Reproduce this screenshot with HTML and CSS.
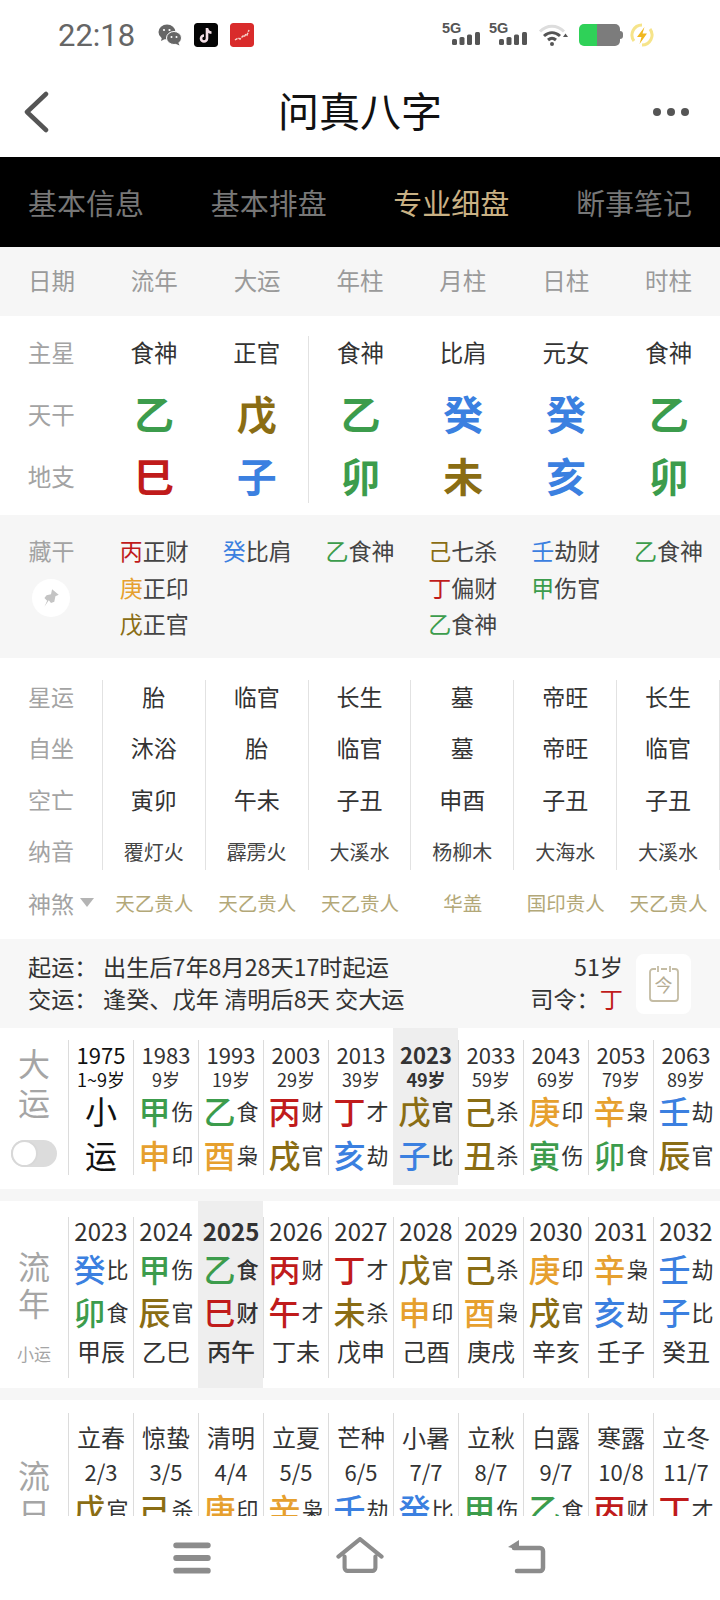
FILE: index.html
```html
<!DOCTYPE html>
<html lang="zh">
<head>
<meta charset="utf-8">
<title>问真八字</title>
<link rel="stylesheet" href="styles.css">
</head>
<body>
<div class="app">
  <div class="status">
    <span class="time">22:18</span>
    <svg class="ic-wechat" viewBox="0 0 24 24"><ellipse cx="9" cy="9" rx="8.5" ry="7.5" fill="#666"/><path d="M4 14l-1 4 5-2.500z" fill="#666"/><ellipse cx="16" cy="15" rx="7.500" ry="6.500" fill="#666" stroke="#fff"/><path d="M20 19l1.500 3.500-4.500-2z" fill="#666"/><circle cx="6" cy="7" r="1.100" fill="#fff"/><circle cx="11.500" cy="7" r="1.100" fill="#fff"/><circle cx="13.500" cy="14" r="1" fill="#fff"/><circle cx="18.500" cy="14" r="1" fill="#fff"/></svg>
    <svg class="ic-app ic-tiktok" viewBox="0 0 24 24"><rect width="24" height="24" rx="3" fill="#050505"/><path d="M13 5v10.500a3 3 0 1 1-3-3M13 5.500c.5 2.500 2.200 4 4.500 4.200" fill="none" stroke="#f4dfe6" stroke-width="2.600"/></svg>
    <svg class="ic-app ic-red" viewBox="0 0 24 24"><rect width="24" height="24" rx="3" fill="#d92b2b"/><path d="M5 17l3-2 2 1 3-3 1 1 2-3 1 1 2-5" fill="none" stroke="#f6d0c8" stroke-width="1.500" stroke-dasharray="3 1"/></svg>
    <div class="status-right">
      <div class="net"><span class="g5">5G</span><svg class="bars" viewBox="0 0 28 13"><rect x="0" y="7" width="5" height="6" rx="1.500"/><rect x="7.500" y="5" width="5" height="8" rx="1.500"/><rect x="15" y="2.500" width="5" height="10.500" rx="1.500"/><rect x="23" y="0" width="5" height="13" rx="1.500"/></svg></div>
      <div class="net net2"><span class="g5">5G</span><svg class="bars" viewBox="0 0 28 13"><rect x="0" y="7" width="5" height="6" rx="1.500"/><rect x="7.500" y="5" width="5" height="8" rx="1.500"/><rect x="15" y="2.500" width="5" height="10.500" rx="1.500"/><rect x="23" y="0" width="5" height="13" rx="1.500"/></svg></div>
      <svg class="ic-wifi" viewBox="0 0 30 22"><path d="M2 7.500C9 .5 19 .5 26 7.500" fill="none" stroke="#ddd" stroke-width="3"/><path d="M6 12c5-4.500 11-4.500 16 0" fill="none" stroke="#555" stroke-width="3"/><path d="M10 16c3-2.500 5-2.500 8 0" fill="none" stroke="#555" stroke-width="3"/><circle cx="14" cy="20" r="2" fill="#555"/><path d="M25 13h5l-2.500-3.500z" fill="#555"/></svg>
      <div class="battery"><span class="batt-fill"></span><span class="batt-rest"></span><span class="batt-cap"></span></div>
      <svg class="ic-bolt" viewBox="0 0 24 24"><path d="M12 2a10 10 0 0 0-8 16M12 22a10 10 0 0 0 8-16" fill="none" stroke="#f6e48a" stroke-width="3"/><path d="M14.500 4L7 14h4.500L9.500 21 17 10.500h-4.500z" fill="#f0b820"/></svg>
    </div>
  </div>

  <header class="topbar">
    <svg class="ic-back" viewBox="0 0 26 42"><path d="M23 3L4 21l19 18" fill="none" stroke="#555" stroke-width="4.500" stroke-linecap="round" stroke-linejoin="round"/></svg>
    <h1 class="title">问真八字</h1>
    <div class="dots"><i></i><i></i><i></i></div>
  </header>

  <nav class="tabs">
    <span class="tab">基本信息</span>
    <span class="tab">基本排盘</span>
    <span class="tab tab-on">专业细盘</span>
    <span class="tab">断事笔记</span>
  </nav>

  <main class="content">
    <div class="heads">
      <span>日期</span><span>流年</span><span>大运</span><span>年柱</span><span>月柱</span><span>日柱</span><span>时柱</span>
    </div>

    <section class="pillars">
      <div class="pcol pcol-label"><span>主星</span><span>天干</span><span>地支</span></div>
      <div class="pcol"><span>食神</span><b class="mu">乙</b><b class="huo">巳</b></div>
      <div class="pcol"><span>正官</span><b class="tu">戊</b><b class="shui">子</b></div>
      <div class="pcol pcol-sep"><span>食神</span><b class="mu">乙</b><b class="mu">卯</b></div>
      <div class="pcol"><span>比肩</span><b class="shui">癸</b><b class="tu">未</b></div>
      <div class="pcol"><span>元女</span><b class="shui">癸</b><b class="shui">亥</b></div>
      <div class="pcol"><span>食神</span><b class="mu">乙</b><b class="mu">卯</b></div>
    </section>

    <section class="hidden-stems">
      <div class="hcol hcol-label"><span>藏干</span>
        <div class="pin"><svg viewBox="0 0 20 20"><path d="M11 2l6 5-3 1.500-1 5-3 1-2-2.500L4 18l2.500-5.500L4 10l2-2.500 4-1z" fill="#c4c4c4"/></svg></div>
      </div>
      <div class="hcol"><span><em class="huo">丙</em>正财</span><span><em class="jin">庚</em>正印</span><span><em class="tu">戊</em>正官</span></div>
      <div class="hcol"><span><em class="shui">癸</em>比肩</span></div>
      <div class="hcol"><span><em class="mu">乙</em>食神</span></div>
      <div class="hcol"><span><em class="tu">己</em>七杀</span><span><em class="huo">丁</em>偏财</span><span><em class="mu">乙</em>食神</span></div>
      <div class="hcol"><span><em class="shui">壬</em>劫财</span><span><em class="mu">甲</em>伤官</span></div>
      <div class="hcol"><span><em class="mu">乙</em>食神</span></div>
    </section>

    <section class="fortune">
      <div class="fcols">
        <div class="fcol fcol-label"><span>星运</span><span>自坐</span><span>空亡</span><span>纳音</span></div>
        <div class="fcol"><span>胎</span><span>沐浴</span><span>寅卯</span><span class="nayin">覆灯火</span></div>
        <div class="fcol"><span>临官</span><span>胎</span><span>午未</span><span class="nayin">霹雳火</span></div>
        <div class="fcol"><span>长生</span><span>临官</span><span>子丑</span><span class="nayin">大溪水</span></div>
        <div class="fcol"><span>墓</span><span>墓</span><span>申酉</span><span class="nayin">杨柳木</span></div>
        <div class="fcol"><span>帝旺</span><span>帝旺</span><span>子丑</span><span class="nayin">大海水</span></div>
        <div class="fcol"><span>长生</span><span>临官</span><span>子丑</span><span class="nayin">大溪水</span></div>
      </div>
      <div class="shensha">
        <span class="ss-label">神煞<i class="tri"></i></span>
        <span>天乙贵人</span><span>天乙贵人</span><span>天乙贵人</span><span>华盖</span><span>国印贵人</span><span>天乙贵人</span>
      </div>
    </section>

    <section class="info">
      <div class="info-left">
        <div class="info-line"><span class="info-key">起运：</span><span>出生后7年8月28天17时起运</span></div>
        <div class="info-line"><span class="info-key">交运：</span><span>逢癸、戊年 清明后8天 交大运</span></div>
      </div>
      <div class="info-right">
        <div>51岁</div>
        <div>司令：<em class="huo">丁</em></div>
      </div>
      <div class="today"><svg viewBox="0 0 32 40"><path d="M8 5H5a3 3 0 0 0-3 3v26a3 3 0 0 0 3 3h22a3 3 0 0 0 3-3V8a3 3 0 0 0-3-3h-3M13 5h6M10 2v6M22 2v6" fill="none" stroke="#c4bca4" stroke-width="1.800"/></svg><span class="today-t">今</span></div>
    </section>

    <section class="luck">
      <div class="side">
        <span class="side-big">大</span><span class="side-big">运</span>
        <span class="toggle"><i></i></span>
      </div>
      <div class="ycol ycol-first"><div class="yin"><div class="yr yr-strong">1975</div><div class="age age-strong">1~9岁</div><div class="xiao">小</div><div class="xiao">运</div></div></div>
      <div class="ycol"><div class="yin"><div class="yr">1983</div><div class="age">9岁</div><div class="gz"><b class="mu">甲</b>伤</div><div class="gz"><b class="jin">申</b>印</div></div></div>
      <div class="ycol"><div class="yin"><div class="yr">1993</div><div class="age">19岁</div><div class="gz"><b class="mu">乙</b>食</div><div class="gz"><b class="jin">酉</b>枭</div></div></div>
      <div class="ycol"><div class="yin"><div class="yr">2003</div><div class="age">29岁</div><div class="gz"><b class="huo">丙</b>财</div><div class="gz"><b class="tu">戌</b>官</div></div></div>
      <div class="ycol"><div class="yin"><div class="yr">2013</div><div class="age">39岁</div><div class="gz"><b class="huo">丁</b>才</div><div class="gz"><b class="shui">亥</b>劫</div></div></div>
      <div class="ycol ycol-on"><div class="yin"><div class="yr">2023</div><div class="age">49岁</div><div class="gz"><b class="tu">戊</b>官</div><div class="gz"><b class="shui">子</b>比</div></div></div>
      <div class="ycol"><div class="yin"><div class="yr">2033</div><div class="age">59岁</div><div class="gz"><b class="tu">己</b>杀</div><div class="gz"><b class="tu">丑</b>杀</div></div></div>
      <div class="ycol"><div class="yin"><div class="yr">2043</div><div class="age">69岁</div><div class="gz"><b class="jin">庚</b>印</div><div class="gz"><b class="mu">寅</b>伤</div></div></div>
      <div class="ycol"><div class="yin"><div class="yr">2053</div><div class="age">79岁</div><div class="gz"><b class="jin">辛</b>枭</div><div class="gz"><b class="mu">卯</b>食</div></div></div>
      <div class="ycol"><div class="yin"><div class="yr">2063</div><div class="age">89岁</div><div class="gz"><b class="shui">壬</b>劫</div><div class="gz"><b class="tu">辰</b>官</div></div></div>
    </section>

    <section class="luck annual">
      <div class="side">
        <span class="side-big">流</span><span class="side-big">年</span>
        <span class="side-small">小运</span>
      </div>
      <div class="ycol ycol-first"><div class="yin"><div class="yr">2023</div><div class="gz"><b class="shui">癸</b>比</div><div class="gz"><b class="mu">卯</b>食</div><div class="xy">甲辰</div></div></div>
      <div class="ycol"><div class="yin"><div class="yr">2024</div><div class="gz"><b class="mu">甲</b>伤</div><div class="gz"><b class="tu">辰</b>官</div><div class="xy">乙巳</div></div></div>
      <div class="ycol ycol-on"><div class="yin"><div class="yr">2025</div><div class="gz"><b class="mu">乙</b>食</div><div class="gz"><b class="huo">巳</b>财</div><div class="xy">丙午</div></div></div>
      <div class="ycol"><div class="yin"><div class="yr">2026</div><div class="gz"><b class="huo">丙</b>财</div><div class="gz"><b class="huo">午</b>才</div><div class="xy">丁未</div></div></div>
      <div class="ycol"><div class="yin"><div class="yr">2027</div><div class="gz"><b class="huo">丁</b>才</div><div class="gz"><b class="tu">未</b>杀</div><div class="xy">戊申</div></div></div>
      <div class="ycol"><div class="yin"><div class="yr">2028</div><div class="gz"><b class="tu">戊</b>官</div><div class="gz"><b class="jin">申</b>印</div><div class="xy">己酉</div></div></div>
      <div class="ycol"><div class="yin"><div class="yr">2029</div><div class="gz"><b class="tu">己</b>杀</div><div class="gz"><b class="jin">酉</b>枭</div><div class="xy">庚戌</div></div></div>
      <div class="ycol"><div class="yin"><div class="yr">2030</div><div class="gz"><b class="jin">庚</b>印</div><div class="gz"><b class="tu">戌</b>官</div><div class="xy">辛亥</div></div></div>
      <div class="ycol"><div class="yin"><div class="yr">2031</div><div class="gz"><b class="jin">辛</b>枭</div><div class="gz"><b class="shui">亥</b>劫</div><div class="xy">壬子</div></div></div>
      <div class="ycol"><div class="yin"><div class="yr">2032</div><div class="gz"><b class="shui">壬</b>劫</div><div class="gz"><b class="shui">子</b>比</div><div class="xy">癸丑</div></div></div>
    </section>

    <section class="luck monthly">
      <div class="side">
        <span class="side-big">流</span><span class="side-big">日</span>
      </div>
      <div class="ycol ycol-first"><div class="yin"><div class="term">立春</div><div class="dt">2/3</div><div class="gz"><b class="tu">戊</b>官</div></div></div>
      <div class="ycol"><div class="yin"><div class="term">惊蛰</div><div class="dt">3/5</div><div class="gz"><b class="tu">己</b>杀</div></div></div>
      <div class="ycol"><div class="yin"><div class="term">清明</div><div class="dt">4/4</div><div class="gz"><b class="jin">庚</b>印</div></div></div>
      <div class="ycol"><div class="yin"><div class="term">立夏</div><div class="dt">5/5</div><div class="gz"><b class="jin">辛</b>枭</div></div></div>
      <div class="ycol"><div class="yin"><div class="term">芒种</div><div class="dt">6/5</div><div class="gz"><b class="shui">壬</b>劫</div></div></div>
      <div class="ycol"><div class="yin"><div class="term">小暑</div><div class="dt">7/7</div><div class="gz"><b class="shui">癸</b>比</div></div></div>
      <div class="ycol"><div class="yin"><div class="term">立秋</div><div class="dt">8/7</div><div class="gz"><b class="mu">甲</b>伤</div></div></div>
      <div class="ycol"><div class="yin"><div class="term">白露</div><div class="dt">9/7</div><div class="gz"><b class="mu">乙</b>食</div></div></div>
      <div class="ycol"><div class="yin"><div class="term">寒露</div><div class="dt">10/8</div><div class="gz"><b class="huo">丙</b>财</div></div></div>
      <div class="ycol"><div class="yin"><div class="term">立冬</div><div class="dt">11/7</div><div class="gz"><b class="huo">丁</b>才</div></div></div>
    </section>
  </main>

  <footer class="navbar">
    <svg class="nav-menu" viewBox="0 0 36 30"><path d="M3 3h30M3 15h30M3 27h30" stroke="#8c8c8c" stroke-width="5.500" stroke-linecap="round"/></svg>
    <svg class="nav-home" viewBox="0 0 46 36"><path d="M2 19L23 2l21 17M8 19v11a3 3 0 0 0 3 3h24a3 3 0 0 0 3-3V19" fill="none" stroke="#8c8c8c" stroke-width="4" stroke-linecap="round" stroke-linejoin="round"/></svg>
    <svg class="nav-back" viewBox="0 0 38 36"><path d="M6 10h26a3 3 0 0 1 3 3v17a3 3 0 0 1-3 3H9" fill="none" stroke="#8c8c8c" stroke-width="4.500" stroke-linecap="round"/><path d="M0 9l11-7v10z" fill="#8c8c8c"/></svg>
  </footer>
</div>
</body>
</html>
```
FILE: styles.css
```css
* { box-sizing: border-box; }
html, body { margin: 0; padding: 0; background: #fff; }
body { font-family: "Noto Sans CJK SC", "Noto Sans", sans-serif; color: #333; }
em { font-style: normal; }
b { font-weight: 500; }

.app { width: 720px; height: 1600px; display: flex; flex-direction: column; overflow: hidden; }

.mu { color: #3c9c4c; }
.huo { color: #c01b1b; }
.tu { color: #8a6d14; }
.jin { color: #e6a02e; }
.shui { color: #3b80e0; }

/* status bar */
.status { height: 70px; flex: none; display: flex; align-items: center; padding-left: 58px; }
.time { font-family: Roboto, sans-serif; font-size: 31px; color: #666; width: 100px; }
.ic-wechat { width: 24px; height: 24px; margin-right: 12px; }
.ic-app { width: 24px; height: 24px; margin-right: 12px; border-radius: 3px; }
.status-right { margin-left: auto; display: flex; align-items: center; padding-right: 66px; }
.net { width: 39px; height: 26px; display: flex; flex-direction: column; margin-right: 8px; }
.net2 { margin-right: 10px; }
.g5 { font-family: "Liberation Sans", sans-serif; font-weight: 700; font-size: 14.500px; line-height: 12px; color: #555; }
.bars { width: 28px; height: 13px; fill: #555; margin-left: 10px; margin-top: -2px; }
.ic-wifi { width: 30px; height: 22px; margin-right: 11px; }
.battery { width: 44px; height: 22px; display: flex; align-items: center; margin-right: 7px; }
.batt-fill { width: 18px; height: 22px; background: #2fd158; border-radius: 5px 0 0 5px; }
.batt-rest { width: 23px; height: 22px; background: #7c7c7c; border-radius: 0 5px 5px 0; }
.batt-cap { width: 3px; height: 8px; background: #7c7c7c; border-radius: 0 3px 3px 0; }
.ic-bolt { width: 24px; height: 24px; }

/* title bar */
.topbar { height: 87px; flex: none; display: grid; grid-template-columns: 1fr auto 1fr; align-items: center; padding-bottom: 4px; }
.ic-back { width: 26px; height: 42px; margin-left: 23px; justify-self: start; }
.title { margin: 0 0 4px; font-size: 41px; font-weight: 400; color: #111; line-height: 1; }
.dots { display: flex; gap: 6px; justify-self: end; margin-right: 31px; }
.dots i { width: 8px; height: 8px; border-radius: 50%; background: #555; }

.tabs { height: 90px; flex: none; background: #000; display: flex; align-items: center; justify-content: space-between; padding: 0 28px; }
.tab { font-size: 29px; color: #777; line-height: 1; }
.tab-on { color: #c9b184; }

/* scrolling content */
.content { flex: 1; min-height: 0; overflow: hidden; }

.heads { height: 69px; background: #f6f6f6; display: grid; grid-template-columns: repeat(7, 1fr); align-items: center; text-align: center; font-size: 23.500px; color: #9a9a9a; padding-bottom: 4px; }

.pillars { height: 199px; padding: 20px 0 12px; display: flex; }
.pcol { flex: 1 1 0; display: flex; flex-direction: column; gap: 26px; align-items: center; font-size: 23.500px; color: #333; }
.pcol > span { height: 36px; line-height: 32px; }
.pcol b { height: 36px; line-height: 30px; font-size: 40px; font-weight: 700; }
.pcol-label { color: #a3a3a3; }
.pcol-sep { border-left: 1px solid #e2e2e2; }

.hidden-stems { height: 143px; background: #f6f6f6; padding-top: 17px; display: grid; grid-template-columns: repeat(7, 1fr); }
.hcol { display: flex; flex-direction: column; align-items: center; font-size: 23px; line-height: 36.500px; color: #444; }
.hcol-label { color: #a3a3a3; }
.pin { width: 38px; height: 38px; border-radius: 50%; background: #fff; margin-top: 10px; display: flex; align-items: center; justify-content: center; }
.pin svg { width: 22px; height: 22px; }

.fortune { height: 281px; padding-top: 22px; }
.fcols { display: grid; grid-template-columns: repeat(7, 1fr); }
.fcol { display: flex; flex-direction: column; gap: 15.300px; align-items: center; font-size: 23px; color: #333; border-right: 1px solid #e2e2e2; }
.fcol > * { height: 36px; line-height: 32px; }
.fcol .nayin { font-size: 20px; line-height: 36px; color: #444; }
.fcol-label { color: #a3a3a3; }
.shensha { display: grid; grid-template-columns: repeat(7, 1fr); margin-top: 15px; font-size: 19.500px; line-height: 36px; text-align: center; color: #b3a878; }
.ss-label { display: flex; align-items: center; padding-left: 28px; gap: 6px; font-size: 23px; color: #a3a3a3; }
.tri { width: 0; height: 0; border-left: 7px solid transparent; border-right: 7px solid transparent; border-top: 9px solid #b4b4b4; }

.info { height: 89px; background: #f7f7f7; display: flex; align-items: center; padding: 0 29px 0 28px; font-size: 23.200px; line-height: 31.500px; color: #333; }
.info-left, .info-right { margin-bottom: 2px; }
.info-line { display: flex; }
.info-key { width: 75px; }
.info-right { margin-left: auto; text-align: right; margin-right: 13px; }
.today { width: 55px; height: 60px; background: #fff; border-radius: 8px; position: relative; display: flex; align-items: center; justify-content: center; }
.today svg { width: 32px; height: 40px; }
.today-t { position: absolute; left: 0; right: 0; top: 18px; text-align: center; font-size: 18px; line-height: 24px; color: #b4ac94; }

/* year strips */
.luck { display: flex; height: 173px; border-bottom: 12px solid #f6f6f6; }
.side { width: 68px; flex: none; display: flex; flex-direction: column; align-items: center; padding-top: 15px; color: #a5a5a5; }
.side-big { font-size: 32px; line-height: 39px; }
.toggle { width: 46px; height: 27px; border-radius: 14px; background: #dcdcdc; margin-top: 19px; display: block; }
.toggle i { display: block; width: 27px; height: 27px; border-radius: 50%; background: #fff; border: 2px solid #d8d8d8; }
.side-small { font-size: 17px; line-height: 24px; margin-top: 21px; color: #a5a5a5; }
.ycol { width: 65px; flex: none; padding-top: 12px; }
.ycol-on { background: #eeeeee; margin-bottom: 4px; }
.yin { height: 135px; border-left: 1px solid #dcdcdc; text-align: center; color: #333; }
.ycol-on .yin { border-left-color: transparent; }
.ycol-on .yr, .ycol-on .age { font-weight: 700; }
.yr { font-size: 22px; line-height: 26px; padding-top: 1px; }
.yr-strong, .age-strong { color: #111; }
.age { font-size: 18px; line-height: 22px; margin-top: 1px; }
.gz { display: flex; align-items: center; justify-content: center; height: 44px; font-size: 22px; line-height: 44px; color: #333; gap: 1px; }
.age + .gz, .age + .xiao { margin-top: -2px; }
.gz b { font-size: 32px; font-weight: 500; }
.ycol-on .gz { font-weight: 500; }
.xiao { font-size: 32px; line-height: 44px; color: #111; }

.annual { height: 199px; }
.annual .ycol-on { margin-bottom: 0; }
.annual .side { padding-top: 46px; }
.annual .side-big { line-height: 37px; }
.annual .ycol { padding-top: 16px; }
.annual .yin { height: 161px; }
.annual .yr { font-size: 24px; }
.annual .gz { height: 43px; }
.annual .gz:nth-child(2) { margin-top: 2px; }
.annual .xy { font-size: 24px; line-height: 36px; margin-top: 1px; }
.annual .ycol-on .xy { font-weight: 500; }

.monthly { height: 200px; border-bottom: 0; }
.monthly .side { padding-top: 55px; }
.monthly .side-big { line-height: 38px; }
.monthly .ycol { padding-top: 13px; }
.monthly .yin { height: 150px; }
.term { font-size: 24px; line-height: 34px; padding-top: 7px; height: 41px; }
.dt { font-size: 22px; line-height: 32px; margin-top: 1px; }
.monthly .gz { height: 40px; margin-top: 1px; }

/* navigation */
.navbar { height: 84px; flex: none; background: #fff; display: flex; align-items: flex-start; padding: 21px 0 0 173px; }
.nav-menu { width: 38px; height: 32px; margin-top: 5px; }
.nav-home { width: 48px; height: 37px; margin-left: 125px; }
.nav-back { width: 38px; height: 36px; margin-left: 124px; margin-top: 1px; }
```
